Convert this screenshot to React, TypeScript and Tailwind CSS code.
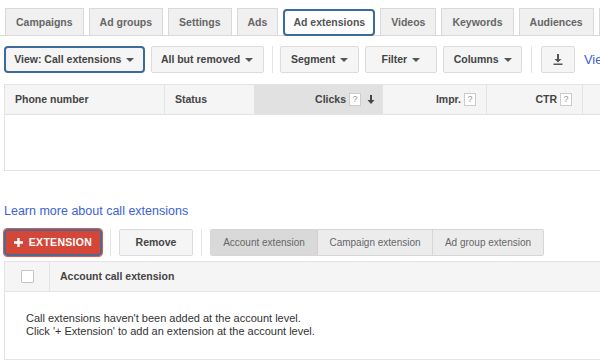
import React from "react";

const Caret = () => (
  <span className="inline-block ml-[5px] w-0 h-0 border-l-[4px] border-r-[4px] border-t-[4px] border-l-transparent border-r-transparent border-t-[#555] align-middle" />
);

const Q = () => (
  <span className="inline-flex items-center justify-center w-[12px] h-[13px] border border-[#ccc] bg-white text-[#999] text-[9px] font-normal ml-[3px] leading-none">?</span>
);

const tabs = ["Campaigns", "Ad groups", "Settings", "Ads", "Ad extensions", "Videos", "Keywords", "Audiences", "Dimensions"];

export default function App() {
  return (
    <div
      className="w-[600px] h-[361px] overflow-hidden bg-white relative"
      style={{ fontFamily: '"Liberation Sans", Arial, sans-serif' }}
    >
      {/* Tabs */}
      <div className="flex items-end gap-[5px] pl-[5px] pt-[8px] border-b border-[#dadada] h-[36px] w-[700px]">
        {tabs.map((t) =>
          t === "Ad extensions" ? (
            <div
              key={t}
              className="h-[27px] px-[8px] flex items-center bg-white border-2 border-[#3b6a9b] rounded-[4px] text-[10.5px] font-bold text-[#555] whitespace-nowrap relative top-[1px]"
            >
              {t}
            </div>
          ) : (
            <div
              key={t}
              className="h-[27px] px-[10px] pt-[2px] flex items-center bg-[#f0f0f0] border border-b-0 border-[#d9d9d9] text-[10.5px] font-bold text-[#666] whitespace-nowrap"
            >
              {t}
            </div>
          )
        )}
      </div>

      {/* Toolbar */}
      <div className="flex items-center mt-[10px] pl-[4px] h-[27px] w-[700px]">
        <div className="h-[27px] w-[142px] flex items-center justify-center border-2 border-[#3b6a9b] rounded-[4px] bg-[#f5f5f5] text-[10.5px] font-bold text-[#444]">
          View: Call extensions
          <Caret />
        </div>
        <div className="ml-[6px] h-[27px] w-[114px] flex items-center justify-center border border-[#dcdcdc] rounded-[2px] bg-[#f5f5f5] text-[10.5px] font-bold text-[#444]">
          All but removed
          <Caret />
        </div>
        <div className="mx-[8px] w-px h-[27px] bg-[#e5e5e5]" />
        <div className="h-[27px] w-[79px] flex items-center justify-center border border-[#dcdcdc] rounded-[2px] bg-[#f5f5f5] text-[10.5px] font-bold text-[#444]">
          Segment
          <Caret />
        </div>
        <div className="ml-[6px] h-[27px] w-[73px] flex items-center justify-center border border-[#dcdcdc] rounded-[2px] bg-[#f5f5f5] text-[10.5px] font-bold text-[#444]">
          Filter
          <Caret />
        </div>
        <div className="ml-[6px] h-[27px] w-[80px] flex items-center justify-center border border-[#dcdcdc] rounded-[2px] bg-[#f5f5f5] text-[10.5px] font-bold text-[#444]">
          Columns
          <Caret />
        </div>
        <div className="mx-[9px] w-px h-[27px] bg-[#e5e5e5]" />
        <div className="h-[27px] w-[34px] flex items-center justify-center border border-[#dcdcdc] rounded-[2px] bg-[#f5f5f5]">
          <svg width="10" height="11" viewBox="0 0 10 11">
            <path d="M4 0h2v5h2.5L5 8.5 1.5 5H4z" fill="#555" />
            <rect x="0.5" y="9.5" width="9" height="1.5" fill="#555" />
          </svg>
        </div>
        <span className="ml-[9px] text-[13px] text-[#3b62d6] whitespace-nowrap">View change history</span>
      </div>

      {/* Table 1 */}
      <div className="mt-[11px] ml-[4px] w-[700px] border-l border-b border-[#e3e3e3]">
        <div className="flex h-[31px] bg-[#f5f5f5] border-t border-b border-[#e3e3e3] text-[10.5px] font-bold text-[#444]">
          <div className="w-[160px] flex items-center pl-[10px] border-r border-[#e3e3e3]">Phone number</div>
          <div className="w-[89px] flex items-center pl-[10px]">Status</div>
          <div className="w-[129px] flex items-center justify-end pr-[7px] bg-[#e1e1e1] border-r border-[#e3e3e3]">
            Clicks
            <Q />
            <svg className="ml-[6px]" width="8" height="9" viewBox="0 0 8 9">
              <path d="M3 0h2v5h2.5L4 9 0.5 5H3z" fill="#444" />
            </svg>
          </div>
          <div className="w-[104px] flex items-center justify-end pr-[10px] border-r border-[#e3e3e3]">
            Impr.
            <Q />
          </div>
          <div className="w-[96px] flex items-center justify-end pr-[10px] border-r border-[#e3e3e3]">
            CTR
            <Q />
          </div>
          <div className="flex-1" />
        </div>
        <div className="h-[55px] bg-white" />
      </div>

      {/* Link */}
      <div className="mt-[33px] pl-[4px] text-[12.5px] leading-[15px] text-[#3b62d6]">
        Learn more about call extensions
      </div>

      {/* Buttons row */}
      <div className="flex items-center mt-[10px] pl-[4px] h-[27px]">
        <div className="h-[27px] w-[98px] flex items-center justify-center bg-[#d44638] border-2 border-[#4d6a90] rounded-[3px] outline outline-1 outline-[#e05a4a] text-white text-[10.5px] font-bold tracking-[0.3px]">
          <svg width="9" height="9" viewBox="0 0 9 9" className="mr-[6px]">
            <path d="M3.3 0h2.4v3.3H9v2.4H5.7V9H3.3V5.7H0V3.3h3.3z" fill="#fff" />
          </svg>
          EXTENSION
        </div>
        <div className="mx-[8px] w-px h-[27px] bg-[#e5e5e5]" />
        <div className="h-[27px] w-[74px] flex items-center justify-center border border-[#dcdcdc] rounded-[2px] bg-[#f5f5f5] text-[10.5px] font-bold text-[#444]">
          Remove
        </div>
        <div className="mx-[8px] w-px h-[27px] bg-[#e5e5e5]" />
        <div className="flex h-[27px] border border-[#d6d6d6] rounded-[2px] text-[10px] text-[#666] overflow-hidden">
          <div className="w-[107px] flex items-center justify-center bg-[#d9d9d9] border-r border-[#d0d0d0]">Account extension</div>
          <div className="w-[115px] flex items-center justify-center bg-[#ececec] border-r border-[#d6d6d6]">Campaign extension</div>
          <div className="w-[110px] flex items-center justify-center bg-[#ececec]">Ad group extension</div>
        </div>
      </div>

      {/* Table 2 */}
      <div className="mt-[5px] ml-[4px] w-[700px] border-l border-b border-[#e3e3e3]">
        <div className="flex h-[31px] bg-[#f5f5f5] border-t border-b border-[#e3e3e3] text-[10.5px] font-bold text-[#444]">
          <div className="w-[45px] flex items-center justify-center border-r border-[#e3e3e3]">
            <div className="w-[13px] h-[13px] bg-white border border-[#c4c4c4] rounded-[1px]" />
          </div>
          <div className="flex items-center pl-[10px]">Account call extension</div>
        </div>
        <div className="h-[67px] bg-white pt-[20px] pl-[21px] text-[11px] leading-[13px] text-[#333]">
          <div>Call extensions haven't been added at the account level.</div>
          <div>Click '+ Extension' to add an extension at the account level.</div>
        </div>
      </div>
    </div>
  );
}
